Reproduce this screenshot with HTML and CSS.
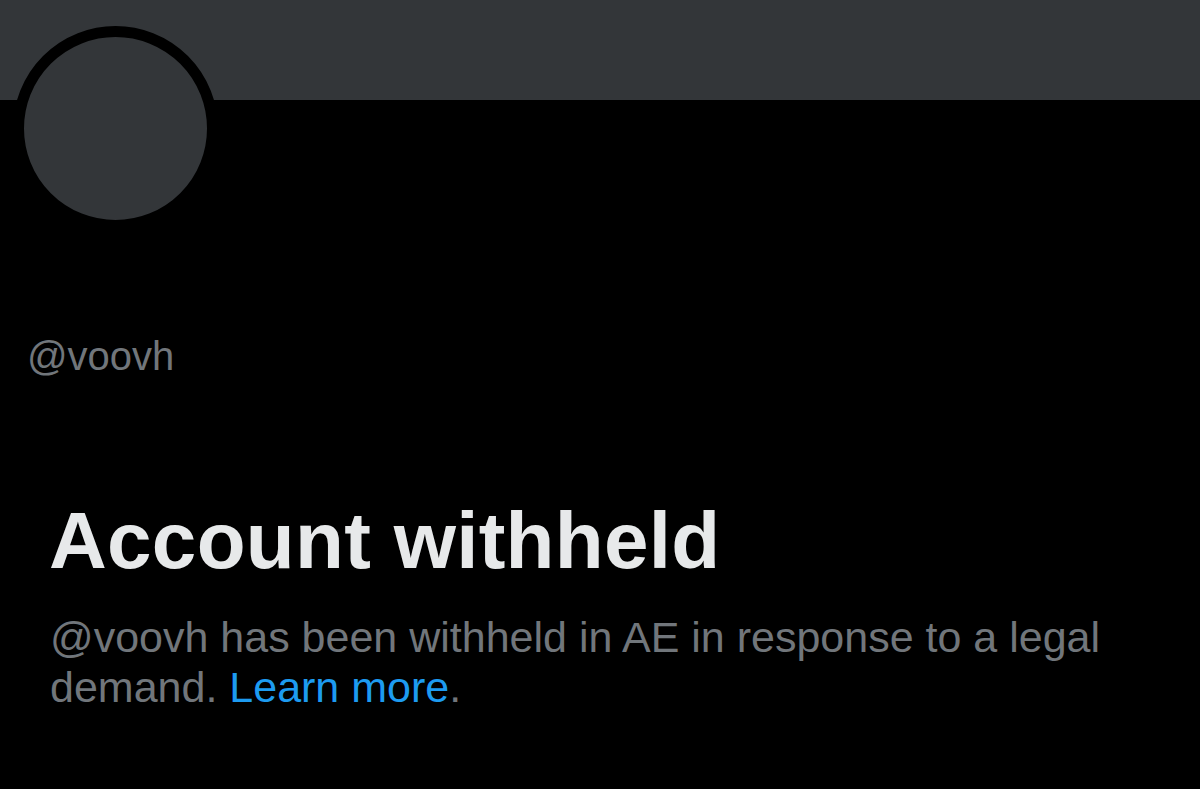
FILE: index.html
```html
<!DOCTYPE html>
<html>
<head>
<meta charset="utf-8">
<link rel="stylesheet" href="styles.css">
</head>
<body>
<div class="page">
  <div class="banner"></div>
  <div class="avatar"></div>
  <main class="content">
    <div class="handle">@voovh</div>
    <h1 class="title">Account withheld</h1>
    <p class="desc">@voovh has been withheld in AE in response to a legal demand. <a class="link" href="#">Learn more</a>.</p>
  </main>
</div>
</body>
</html>
```
FILE: styles.css
```css
html, body {
  margin: 0;
  padding: 0;
  background: #000;
}
.page {
  position: relative;
  width: 1200px;
  height: 789px;
  overflow: hidden;
  background: #000;
  font-family: "Liberation Sans", Arial, sans-serif;
}
.banner {
  height: 100px;
  background: #333639;
}
.avatar {
  position: absolute;
  left: 13px;
  top: 26px;
  width: 183px;
  height: 183px;
  border: 11.5px solid #000;
  border-radius: 50%;
  background: #333639;
}
.content {
  padding: 232px 0 0 0;
}
.handle {
  margin-left: 27px;
  font-size: 40px;
  line-height: 48px;
  color: #71767b;
}
.title {
  margin: 116px 0 0 49px;
  font-size: 80px;
  line-height: 90px;
  font-weight: 700;
  letter-spacing: 0.3px;
  color: #e7e9ea;
}
.desc {
  margin: 26px 0 0 50px;
  width: 1120px;
  font-size: 43px;
  line-height: 50px;
  color: #71767b;
}
.link {
  color: #1d9bf0;
  text-decoration: none;
}
```
